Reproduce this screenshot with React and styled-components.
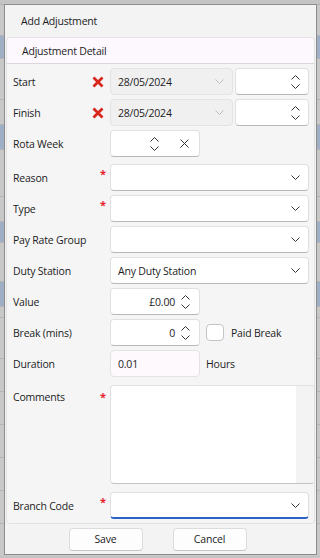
import React from 'react'
import styled, { createGlobalStyle } from 'styled-components'

const GlobalStyle = createGlobalStyle`
  html, body { margin: 0; padding: 0; }
  body {
    width: 320px;
    height: 558px;
    overflow: hidden;
    background: #c4c4c4;
    font-family: 'Open Sans', 'Noto Sans', sans-serif;
  }
`

const Page = styled.div`
  position: relative;
  width: 320px;
  height: 558px;
  overflow: hidden;
`

const Backdrop = styled.div`
  display: flex;
  flex-direction: column;
  padding-top: 4px;
`

const BgRow = styled.div`
  height: ${(p) => p.h || 22}px;
  border-top: 1px solid #b4b4b4;
  background: ${(p) => (p.sel ? '#9fb0c6' : '#c8c8c8')};
`

const Dialog = styled.div`
  position: absolute;
  left: 4px;
  top: 4px;
  width: 311px;
  height: 549px;
  border: 1px solid #8c8c8c;
  background: #f3f3f3;
  display: flex;
  flex-direction: column;
  color: #1c1c24;
  font-size: 10.5px;
  letter-spacing: -0.2px;
`

const Title = styled.div`
  height: 32px;
  display: flex;
  align-items: center;
  padding-left: 16px;
`

const Panel = styled.div`
  margin: 0 1px;
  height: 485px;
  border: 1px solid #e2e2e2;
  border-radius: 4px;
  background: #f5f5f5;
  display: flex;
  flex-direction: column;
`

const PanelHeader = styled.div`
  height: 25px;
  background: #fdf8fd;
  border-bottom: 1px solid #d8d8d8;
  border-radius: 4px 4px 0 0;
  display: flex;
  align-items: center;
  padding-left: 15px;
`

const Form = styled.div`
  display: flex;
  flex-direction: column;
  padding: 0 0 0 6px;
`

const Row = styled.div`
  display: grid;
  grid-template-columns: 84px 13px auto;
  align-items: ${(p) => (p.top ? 'start' : 'center')};
  min-height: 27px;
  margin-top: ${(p) => p.gap ?? 4}px;
`

const Label = styled.div`
  padding-top: ${(p) => (p.top ? '5px' : '0')};
`

const Mark = styled.div`
  display: flex;
  justify-content: center;
  align-self: ${(p) => (p.top ? 'start' : 'center')};
`

const Asterisk = styled.span`
  color: #e8202a;
  font-size: 11px;
  line-height: 1;
  margin-top: ${(p) => p.mt ?? -8}px;
  margin-left: -1px;
  font-weight: 700;
`

const CrossWrap = styled.span`
  display: flex;
  margin-left: -11px;
`

const Fields = styled.div`
  display: flex;
  align-items: center;
  gap: ${(p) => p.gap ?? 2}px;
`

const Box = styled.div`
  box-sizing: border-box;
  width: ${(p) => p.w}px;
  height: 27px;
  border: 1px solid ${(p) => (p.disabled ? '#e3e3e3' : '#e0e0e0')};
  border-bottom-color: ${(p) => (p.focus ? '#2a62c9' : p.disabled ? '#e3e3e3' : '#b8b8b8')};
  border-bottom-width: ${(p) => (p.focus ? 2 : 1)}px;
  border-radius: 4px;
  background: ${(p) => p.bg || '#ffffff'};
  display: flex;
  align-items: center;
  padding: 0 ${(p) => p.pr ?? 8}px 0 7px;
  gap: 6px;
`

const BoxText = styled.span`
  flex: 1;
  text-align: ${(p) => (p.right ? 'right' : 'left')};
  white-space: nowrap;
`

const Icons = styled.div`
  display: flex;
  align-items: center;
  gap: ${(p) => p.gap ?? 0}px;
`

const Spin = styled.div`
  display: flex;
  flex-direction: column;
  align-items: center;
  gap: 4px;
`

const Check = styled.div`
  box-sizing: border-box;
  width: 18px;
  height: 17px;
  border: 1px solid #c4c4c4;
  border-radius: 4px;
  background: #ffffff;
  margin-left: 6px;
`

const SideText = styled.span`
  margin-left: ${(p) => p.ml ?? 6}px;
`

const TextArea = styled.div`
  box-sizing: border-box;
  width: 205px;
  height: 99px;
  border: 1px solid #e0e0e0;
  border-bottom-color: #c4c4c4;
  border-radius: 4px;
  background: #ffffff;
  display: flex;
  justify-content: flex-end;
  overflow: hidden;
`

const ScrollTrack = styled.div`
  width: 18px;
  background: #f3f3f3;
`

const Footer = styled.div`
  flex: 1;
  display: flex;
  justify-content: center;
  align-items: center;
  gap: 30px;
  padding-right: 6px;
`

const Button = styled.div`
  box-sizing: border-box;
  width: 74px;
  height: 23px;
  border: 1px solid #dcdcdc;
  border-bottom-color: #c6c6c6;
  border-radius: 4px;
  background: #fdfdfd;
  display: flex;
  align-items: center;
  justify-content: center;
`

const Chevron = ({ up, color = '#333' }) => (
  <svg width="9" height="5" viewBox="0 0 9 5">
    <path d={up ? 'M0.5 4.5L4.5 0.5L8.5 4.5' : 'M0.5 0.5L4.5 4.5L8.5 0.5'} fill="none" stroke={color} strokeWidth="1" />
  </svg>
)

const Spinner = () => (
  <Spin>
    <Chevron up />
    <Chevron />
  </Spin>
)

const Close = () => (
  <svg width="9" height="9" viewBox="0 0 9 9">
    <path d="M0.5 0.5L8.5 8.5M8.5 0.5L0.5 8.5" fill="none" stroke="#333" strokeWidth="1" />
  </svg>
)

const RedX = () => (
  <CrossWrap>
    <svg width="12" height="12" viewBox="0 0 12 12">
      <path d="M1.5 1.5L10.5 10.5M10.5 1.5L1.5 10.5" fill="none" stroke="#d8261c" strokeWidth="2.8" />
    </svg>
  </CrossWrap>
)

const Combo = ({ text, w = 199, focus }) => (
  <Box w={w} focus={focus}>
    <BoxText>{text}</BoxText>
    <Chevron />
  </Box>
)

const DateRow = ({ label, gap }) => (
  <Row gap={gap}>
    <Label>{label}</Label>
    <Mark><RedX /></Mark>
    <Fields>
      <Box w={123} bg="#f0f0f0" disabled>
        <BoxText>28/05/2024</BoxText>
        <Chevron color="#bdbdbd" />
      </Box>
      <Box w={74}>
        <BoxText />
        <Spinner />
      </Box>
    </Fields>
  </Row>
)

const bgRows = [
  { h: 30 }, { h: 22, sel: true }, { h: 40 }, { h: 24 }, { h: 24, sel: true }, { h: 46 },
  { h: 24 }, { h: 20, sel: true }, { h: 38 }, { h: 24, sel: true }, { h: 10 }, { h: 40 },
  { h: 32 }, { h: 32 }, { h: 32 }, { h: 32 }, { h: 32 }, { h: 32 },
]

export default function App() {
  return (
    <Page>
      <GlobalStyle />
      <Backdrop>
        {bgRows.map((r, i) => <BgRow key={i} h={r.h} sel={r.sel} />)}
      </Backdrop>
      <Dialog>
        <Title>Add Adjustment</Title>
        <Panel>
          <PanelHeader>Adjustment Detail</PanelHeader>
          <Form>
            <DateRow label="Start" />
            <DateRow label="Finish" />
            <Row>
              <Label>Rota Week</Label>
              <Mark />
              <Fields>
                <Box w={90} pr={10}>
                  <BoxText />
                  <Icons gap={21}>
                    <Spinner />
                    <Close />
                  </Icons>
                </Box>
              </Fields>
            </Row>
            <Row gap={7}>
              <Label>Reason</Label>
              <Mark><Asterisk>*</Asterisk></Mark>
              <Combo />
            </Row>
            <Row>
              <Label>Type</Label>
              <Mark><Asterisk>*</Asterisk></Mark>
              <Combo />
            </Row>
            <Row>
              <Label>Pay Rate Group</Label>
              <Mark />
              <Combo />
            </Row>
            <Row>
              <Label>Duty Station</Label>
              <Mark />
              <Combo text="Any Duty Station" />
            </Row>
            <Row>
              <Label>Value</Label>
              <Mark />
              <Fields>
                <Box w={90} pr={9}>
                  <BoxText right>£0.00</BoxText>
                  <Spinner />
                </Box>
              </Fields>
            </Row>
            <Row>
              <Label>Break (mins)</Label>
              <Mark />
              <Fields gap={0}>
                <Box w={90} pr={9}>
                  <BoxText right>0</BoxText>
                  <Spinner />
                </Box>
                <Check />
                <SideText ml={7}>Paid Break</SideText>
              </Fields>
            </Row>
            <Row>
              <Label>Duration</Label>
              <Mark />
              <Fields gap={0}>
                <Box w={90} bg="#fdf9fd" disabled>
                  <BoxText>0.01</BoxText>
                </Box>
                <SideText>Hours</SideText>
              </Fields>
            </Row>
            <Row gap={8} top>
              <Label top>Comments</Label>
              <Mark top><Asterisk mt={6}>*</Asterisk></Mark>
              <TextArea>
                <ScrollTrack />
              </TextArea>
            </Row>
            <Row gap={8}>
              <Label>Branch Code</Label>
              <Mark><Asterisk>*</Asterisk></Mark>
              <Combo focus />
            </Row>
          </Form>
        </Panel>
        <Footer>
          <Button>Save</Button>
          <Button>Cancel</Button>
        </Footer>
      </Dialog>
    </Page>
  )
}
